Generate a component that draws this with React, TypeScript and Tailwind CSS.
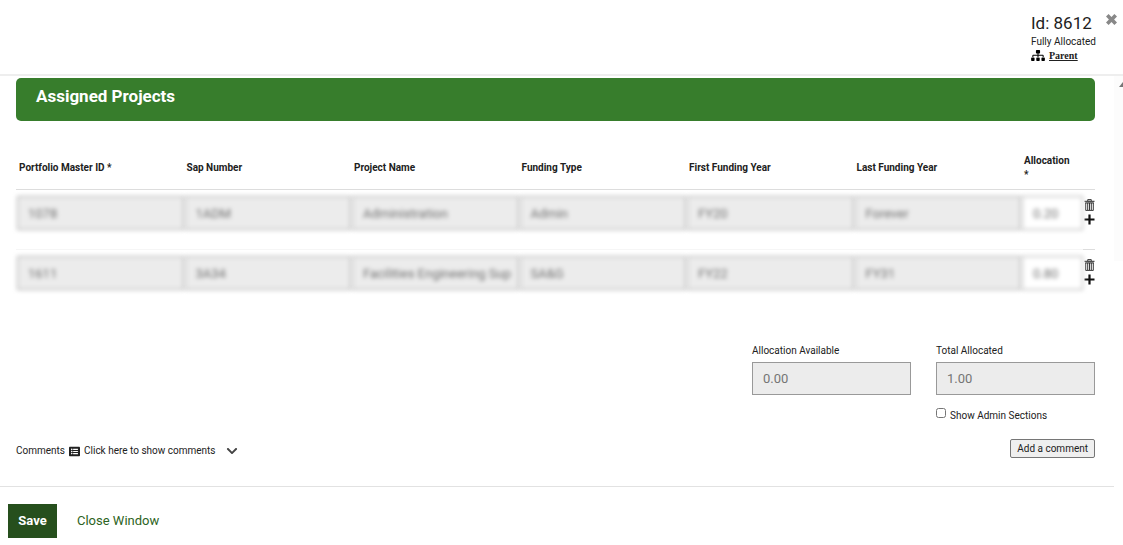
import React, { useState } from "react";
import { FaChevronDown, FaListAlt, FaSitemap } from "react-icons/fa";

type Project = {
  id: string;
  sap: string;
  name: string;
  funding: string;
  first: string;
  last: string;
  allocation: string;
};

const projects: Project[] = [
  {
    id: "1078",
    sap: "1ADM",
    name: "Administration",
    funding: "Admin",
    first: "FY20",
    last: "Forever",
    allocation: "0.20",
  },
  {
    id: "1611",
    sap: "3A34",
    name: "Facilities Engineering Sup",
    funding: "SA&G",
    first: "FY22",
    last: "FY31",
    allocation: "0.80",
  },
];

const columns = [
  "Portfolio Master ID *",
  "Sap Number",
  "Project Name",
  "Funding Type",
  "First Funding Year",
  "Last Funding Year",
];

const TrashIcon = () => (
  <svg viewBox="0 0 11 12" className="h-3 w-[11px]" fill="none" stroke="#222222">
    <path d="M3.7 1.8V.7h3.6v1.1M.5 2.3h10" />
    <path d="M1.2 3.9h8.6" />
    <path d="M1.7 4v7.4h7.6V4M3.7 4v7M5.5 4v7M7.3 4v7" strokeWidth="0.9" />
  </svg>
);

const PlusIcon = () => (
  <svg viewBox="0 0 11 11" className="h-[11px] w-[11px]" fill="none" stroke="#111111">
    <path d="M5.5 .5v10M.5 5.5h10" strokeWidth="2.2" />
  </svg>
);

const ProjectRow = ({ project }: { project: Project }) => {
  const cells = [
    project.id,
    project.sap,
    project.name,
    project.funding,
    project.first,
    project.last,
  ];

  return (
    <tr className="group h-[60px] align-top">
      {cells.map((value, i) => (
        <td
          key={columns[i]}
          className="border-b border-[#f6f6f6] pt-[6px] pl-px group-last:border-transparent"
        >
          <input
            aria-label={columns[i]}
            readOnly
            defaultValue={value}
            className="block h-[34px] w-full border border-[#a8a8a8] bg-[#ececec] pr-[6px] pl-[10px] text-[13px] text-[#707070] blur-[2px]"
          />
        </td>
      ))}
      <td className="border-b border-[#f6f6f6] pt-[6px] pl-px group-last:border-transparent">
        <input
          aria-label="Allocation"
          defaultValue={project.allocation}
          className="block h-[34px] w-full border border-[#a8a8a8] bg-white px-[10px] text-[13px] text-[#707070] blur-[2px]"
        />
      </td>
      <td className="border-b border-[#dddddd] pt-[9px] group-last:border-transparent">
        <div className="flex flex-col items-end gap-[3px]">
          <button type="button" aria-label="Delete project">
            <TrashIcon />
          </button>
          <button type="button" aria-label="Add project">
            <PlusIcon />
          </button>
        </div>
      </td>
    </tr>
  );
};

const Header = () => {
  return (
    <header className="flex h-[76px] items-start justify-end border-b-2 border-[#eeeeee] pr-[6px]">
      <div className="w-[75px] pt-3">
        <h1 className="text-[17px] leading-[23px] whitespace-nowrap">Id: 8612</h1>
        <p className="leading-[13px]">Fully Allocated</p>
        <div className="flex h-[14px] items-center gap-1">
          <FaSitemap className="h-[11px] w-[14px] text-black" />
          <a
            href="#parent"
            className="font-['Liberation_Serif',serif] font-bold underline"
          >
            Parent
          </a>
        </div>
      </div>
      <button type="button" aria-label="Close" className="mt-[14px] text-[#888888]">
        <svg viewBox="0 0 11 11" className="h-[11px] w-[11px]" fill="currentColor">
          <path d="M2.6 0 5.5 2.9 8.4 0 11 2.6 8.1 5.5 11 8.4 8.4 11 5.5 8.1 2.6 11 0 8.4 2.9 5.5 0 2.6Z" />
        </svg>
      </button>
    </header>
  );
};

const Totals = () => {
  const [showAdmin, setShowAdmin] = useState(false);

  return (
    <div className="mt-[33px] flex justify-end gap-[25px]">
      <div className="w-[159px]">
        <label htmlFor="available" className="block leading-4">
          Allocation Available
        </label>
        <input
          id="available"
          readOnly
          defaultValue="0.00"
          className="mt-[3px] block h-[33px] w-full border border-[#999999] bg-[#ececec] px-[10px] text-[13px] text-[#757575]"
        />
      </div>
      <div className="w-[159px]">
        <label htmlFor="total" className="block leading-4">
          Total Allocated
        </label>
        <input
          id="total"
          readOnly
          defaultValue="1.00"
          className="mt-[3px] block h-[33px] w-full border border-[#999999] bg-[#ececec] px-[10px] text-[13px] text-[#757575]"
        />
        <label className="mt-[13px] flex items-start gap-1 leading-4">
          <input
            type="checkbox"
            checked={showAdmin}
            onChange={(e) => setShowAdmin(e.target.checked)}
            className="h-[10px] w-[10px]"
          />
          <span>Show Admin Sections</span>
        </label>
      </div>
    </div>
  );
};

export default function App() {
  return (
    <div className="bg-white font-[Roboto,sans-serif] text-[10px] text-[#212121]">
      <Header />
      <div className="flex">
        <main className="min-w-0 flex-1 pt-[2px]">
          <div className="pr-[19px] pl-4">
            <div className="h-[43px] rounded-[5px] bg-[#377d2c] pt-[6px] pl-5">
              <h2 className="text-[17px] leading-[24px] font-bold text-white">Assigned Projects</h2>
            </div>

            <table className="mt-[25px] w-full table-fixed border-separate border-spacing-0">
              <thead>
                <tr className="h-[44px]">
                  {columns.map((column) => (
                    <th
                      key={column}
                      scope="col"
                      className="border-b border-[#dddddd] px-[3px] text-left leading-[14px] font-bold"
                    >
                      {column}
                    </th>
                  ))}
                  <th
                    scope="col"
                    className="w-[62px] border-b border-[#dddddd] px-[3px] text-left leading-[14px] font-bold"
                  >
                    Allocation
                    <br />*
                  </th>
                  <th className="w-3 border-b border-[#dddddd]" aria-label="Actions" />
                </tr>
              </thead>
              <tbody>
                {projects.map((project) => (
                  <ProjectRow key={project.id} project={project} />
                ))}
              </tbody>
            </table>

            <Totals />

            <div className="mt-[15px] flex items-start justify-between">
              <button type="button" className="mt-1 flex items-center leading-4">
                Comments
                <FaListAlt className="mx-1 h-[11px] w-[11px]" />
                Click here to show comments
                <FaChevronDown className="ml-[10px] h-[12px] w-[12px] text-[#444444]" />
              </button>
              <button
                type="button"
                className="h-[19px] rounded-[2px] border border-[#767676] bg-[#efefef] px-[6px] leading-4"
              >
                Add a comment
              </button>
            </div>
          </div>

          <footer className="mt-[27px] flex items-center gap-5 border-t border-[#e2e2e2] px-2 pt-[17px]">
            <button
              type="button"
              className="h-[34px] w-[49px] bg-[#264f1d] text-[13px] font-bold text-white"
            >
              Save
            </button>
            <button type="button" className="text-[13px] text-[#2d6323]">
              Close Window
            </button>
          </footer>
        </main>
        <div className="h-[185px] w-[9px] overflow-hidden bg-[#fcfcfc] pt-[6px] pl-[5px]">
          <svg viewBox="0 0 8 5" className="h-[5px] w-[8px]" fill="#777777">
            <path d="M4 0 8 5H0Z" />
          </svg>
        </div>
      </div>
    </div>
  );
}
